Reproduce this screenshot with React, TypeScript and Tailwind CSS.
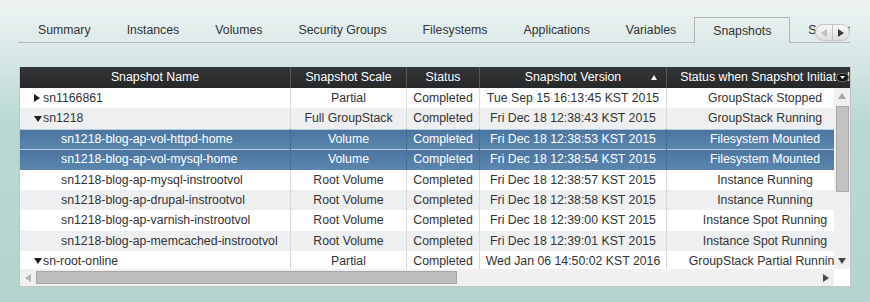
import React from 'react';

type Row = {
  name: string;
  level: 0 | 1;
  open?: boolean;
  scale: string;
  status: string;
  version: string;
  state: string;
  selected?: boolean;
};

const tabs = ['Summary', 'Instances', 'Volumes', 'Security Groups', 'Filesystems', 'Applications', 'Variables', 'Snapshots', 'Settings'];

const rows: Row[] = [
  { name: 'sn1166861', level: 0, open: false, scale: 'Partial', status: 'Completed', version: 'Tue Sep 15 16:13:45 KST 2015', state: 'GroupStack Stopped' },
  { name: 'sn1218', level: 0, open: true, scale: 'Full GroupStack', status: 'Completed', version: 'Fri Dec 18 12:38:43 KST 2015', state: 'GroupStack Running' },
  { name: 'sn1218-blog-ap-vol-httpd-home', level: 1, scale: 'Volume', status: 'Completed', version: 'Fri Dec 18 12:38:53 KST 2015', state: 'Filesystem Mounted', selected: true },
  { name: 'sn1218-blog-ap-vol-mysql-home', level: 1, scale: 'Volume', status: 'Completed', version: 'Fri Dec 18 12:38:54 KST 2015', state: 'Filesystem Mounted', selected: true },
  { name: 'sn1218-blog-ap-mysql-instrootvol', level: 1, scale: 'Root Volume', status: 'Completed', version: 'Fri Dec 18 12:38:57 KST 2015', state: 'Instance Running' },
  { name: 'sn1218-blog-ap-drupal-instrootvol', level: 1, scale: 'Root Volume', status: 'Completed', version: 'Fri Dec 18 12:38:58 KST 2015', state: 'Instance Running' },
  { name: 'sn1218-blog-ap-varnish-instrootvol', level: 1, scale: 'Root Volume', status: 'Completed', version: 'Fri Dec 18 12:39:00 KST 2015', state: 'Instance Spot Running' },
  { name: 'sn1218-blog-ap-memcached-instrootvol', level: 1, scale: 'Root Volume', status: 'Completed', version: 'Fri Dec 18 12:39:01 KST 2015', state: 'Instance Spot Running' },
  { name: 'sn-root-online', level: 0, open: true, scale: 'Partial', status: 'Completed', version: 'Wed Jan 06 14:50:02 KST 2016', state: 'GroupStack Partial Running' },
];

function Tri({ dir, color }: { dir: 'up' | 'down' | 'left' | 'right'; color: string }) {
  if (dir === 'right') return <svg width="6" height="8" viewBox="0 0 6 8"><path d="M0 0L6 4L0 8Z" fill={color} /></svg>;
  if (dir === 'left') return <svg width="6" height="8" viewBox="0 0 6 8"><path d="M6 0L0 4L6 8Z" fill={color} /></svg>;
  if (dir === 'up') return <svg width="8" height="6" viewBox="0 0 8 6"><path d="M0 6L4 0L8 6Z" fill={color} /></svg>;
  return <svg width="8" height="6" viewBox="0 0 8 6"><path d="M0 0H8L4 6Z" fill={color} /></svg>;
}

export default function App() {
  return (
    <div className="w-[870px] h-[302px] overflow-hidden font-['Liberation_Sans',Arial,sans-serif] bg-[linear-gradient(to_bottom,#eef3f3_0px,#d6e7e5_60px,#bad9d3_120px,#b3d4ce_100%)]">
      {/* tab strip */}
      <div className="relative ml-[18px] mt-[17px] w-[832px] h-[26px] flex overflow-hidden">
        <div className="w-[2px] shrink-0 border-b border-[#b8b8b8]" />
        {tabs.map(t =>
          t === 'Snapshots' ? (
            <div key={t} className="shrink-0 h-[26px] px-[18px] pt-[2px] flex items-center text-[12.3px] text-[#333] border border-b-0 border-[#b4b4b4]">
              {t}
            </div>
          ) : (
            <div key={t} className="shrink-0 h-[26px] px-[18px] pt-[2px] flex items-center text-[12.3px] text-[#333] border-b border-[#b8b8b8]">
              {t}
            </div>
          ),
        )}
        <div className="flex-1 border-b border-[#b8b8b8]" />
        <div className="absolute right-0 top-[7px] w-[35px] h-[17px] rounded-full border border-[#c4c4c4] bg-[linear-gradient(to_bottom,#f8f8f8,#dedede)] flex">
          <div className="flex-1 flex items-center justify-center border-r border-[#c4c4c4]">
            <Tri dir="left" color="#c0c0c0" />
          </div>
          <div className="flex-1 flex items-center justify-center">
            <Tri dir="right" color="#3a3a3a" />
          </div>
        </div>
      </div>

      {/* grid panel */}
      <div className="ml-[19px] mt-[24px] w-[832px] bg-white border-x border-b border-[#c4c4c4] overflow-hidden">
        <div className="relative h-[21px] flex bg-[linear-gradient(to_bottom,#333537,#26282a)] text-white text-[12.3px] overflow-hidden">
          <div className="shrink-0 w-[271px] text-center leading-[21px] border-r border-[#55585b]">Snapshot Name</div>
          <div className="shrink-0 w-[116px] text-center leading-[21px] border-r border-[#55585b]">Snapshot Scale</div>
          <div className="shrink-0 w-[73px] text-center leading-[21px] border-r border-[#55585b]">Status</div>
          <div className="relative shrink-0 w-[187px] text-center leading-[21px] border-r border-[#55585b]">
            Snapshot Version
            <span className="absolute right-[9px] top-[8px] flex">
              <svg width="6" height="5" viewBox="0 0 6 5"><path d="M0 5L3 0L6 5Z" fill="#fff" /></svg>
            </span>
          </div>
          <div className="shrink-0 w-[196px] text-center leading-[21px] whitespace-nowrap">Status when Snapshot Initiated</div>
          <div className="absolute right-[1px] top-[6px] w-[13px] h-[9px] rounded-full bg-[#151515] border border-[#6a6a6a] flex items-center justify-center">
            <svg width="5" height="3" viewBox="0 0 5 3"><path d="M0 0H5L2.5 3Z" fill="#fff" /></svg>
          </div>
        </div>

        <div className="flex h-[181px]">
          <div className="w-[814px] h-[181px] overflow-hidden">
            {rows.map((r, i) => {
              const sel = !!r.selected;
              const bg = sel
                ? 'bg-[linear-gradient(to_bottom,#4a749e,#5b86ae)] text-white shadow-[inset_0_1px_0_#b9cde0]'
                : i % 2 === 1
                  ? 'bg-[#eeeff1] text-[#333]'
                  : 'bg-white text-[#333]';
              const sep = sel ? 'border-[#4a6f95]' : 'border-[#dadada]';
              return (
                <div key={i} className={`flex h-[20.4px] text-[12.3px] leading-[20.4px] whitespace-nowrap ${bg}`}>
                  <div className={`shrink-0 w-[271px] border-r ${sep} flex items-center ${r.level === 0 ? 'pl-[14px]' : 'pl-[41px]'}`}>
                    {r.level === 0 && (
                      <span className="w-[8px] mr-[1px] flex items-center justify-start">
                        <Tri dir={r.open ? 'down' : 'right'} color="#1e1e1e" />
                      </span>
                    )}
                    {r.name}
                  </div>
                  <div className={`shrink-0 w-[116px] border-r ${sep} text-center`}>{r.scale}</div>
                  <div className={`shrink-0 w-[73px] border-r ${sep} text-center`}>{r.status}</div>
                  <div className={`shrink-0 w-[187px] border-r ${sep} text-center`}>{r.version}</div>
                  <div className="shrink-0 w-[196px] text-center">{r.state}</div>
                </div>
              );
            })}
          </div>
          {/* vertical scrollbar */}
          <div className="w-[16px] h-[181px] bg-[#f0f0f0] flex flex-col items-center">
            <div className="h-[16px] flex items-center justify-center">
              <Tri dir="up" color="#a8a8a8" />
            </div>
            <div className="w-[13px] h-[86px] mt-[2px] bg-[#c2c2c2] border border-[#a9a9a9]" />
            <div className="flex-1" />
            <div className="h-[16px] flex items-center justify-center">
              <Tri dir="down" color="#4a4a4a" />
            </div>
          </div>
        </div>

        {/* horizontal scrollbar */}
        <div className="flex h-[17px]">
          <div className="w-[814px] bg-[#f0f0f0] flex items-center">
            <div className="w-[16px] flex items-center justify-center">
              <Tri dir="left" color="#b4b4b4" />
            </div>
            <div className="w-[421px] h-[13px] bg-[#bdbdbd] border border-[#a6a6a6]" />
            <div className="flex-1" />
            <div className="w-[16px] flex items-center justify-center">
              <Tri dir="right" color="#4a4a4a" />
            </div>
          </div>
          <div className="w-[16px] bg-white" />
        </div>
      </div>
    </div>
  );
}
